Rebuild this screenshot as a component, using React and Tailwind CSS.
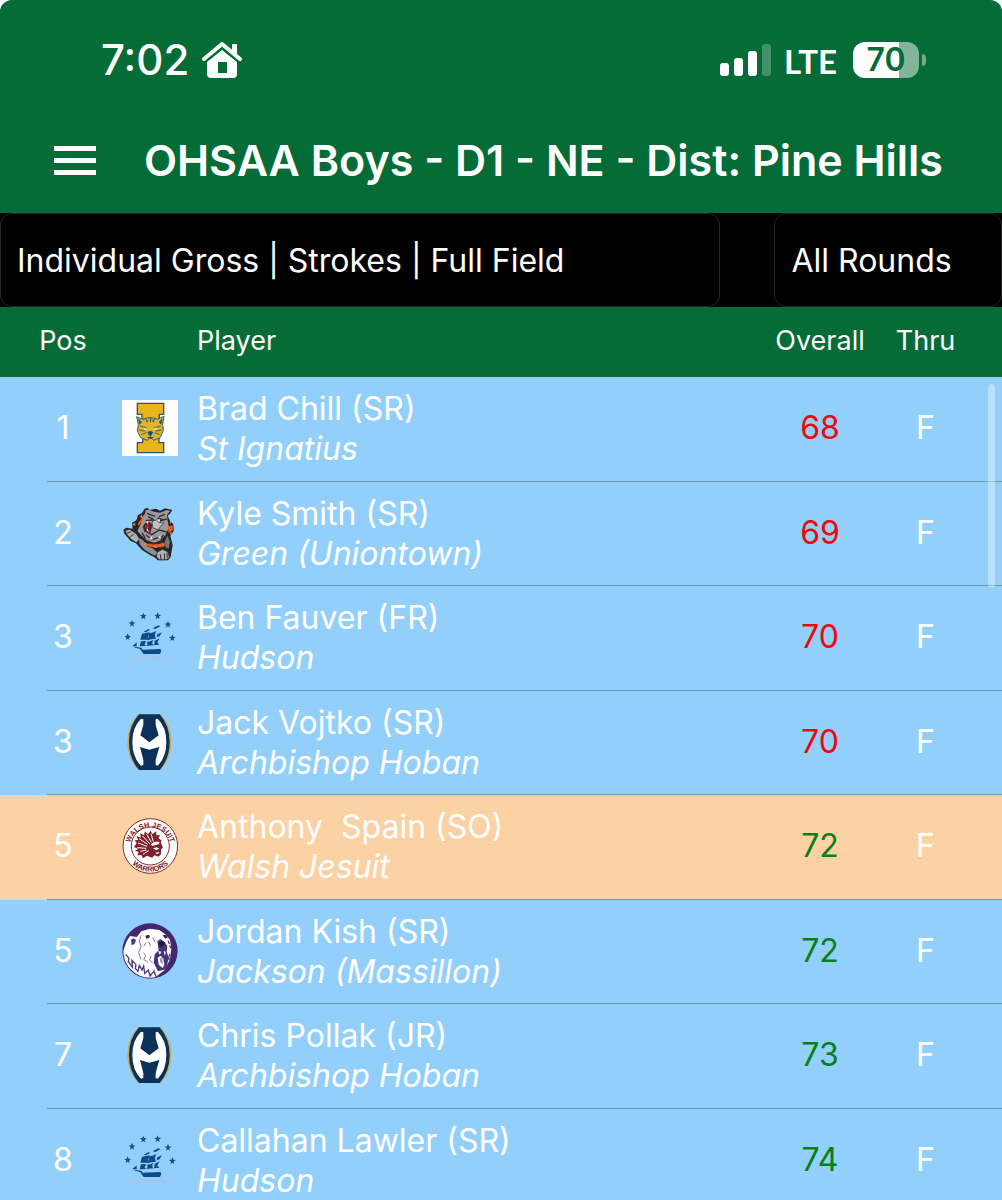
import React from "react";

function IgnatiusLogo() {
  return (
    <svg viewBox="36 30 168 168" className="block size-14" role="img" aria-label="St Ignatius logo">
      <rect x="36" y="30" width="168" height="168" fill="#fff" />
      <path d="M82 40H161V73H148V88H96V73H82Z" fill="#eab41c" stroke="#1d5a78" strokeWidth="4" />
      <path d="M98 144H147V158H161V188H82V158H98Z" fill="#eab41c" stroke="#1d5a78" strokeWidth="4" />
      <path d="M80 80L98 88Q120 78 143 88L162 79L158 103L160 122L150 143L131 151L122 142L112 151L92 143L82 123L85 104Z" fill="#e3b32c" stroke="#2c6472" strokeWidth="3" />
      <path d="M84 84L96 97L88 104ZM158 84L146 97L154 104ZM105 84L115 93L111 98ZM136 84L126 93L130 98ZM119 83H124L123 97H120Z" fill="#1d5a86" />
      <path d="M90 108L110 114M152 108L132 114M87 120L106 123M155 120L136 123M94 133L110 128M149 133L133 128" stroke="#6b7d49" strokeWidth="4" fill="none" />
      <path d="M100 112L113 119L103 119ZM142 112L129 119L139 119Z" fill="#fff3b0" />
      <path d="M113 126Q121 120 129 126L126 134L121 139L115 133Z" fill="#154f80" />
      <path d="M121 138V145M112 142Q121 146 130 142" stroke="#154f80" strokeWidth="3" fill="none" />
    </svg>
  );
}

function BulldogLogo() {
  return (
    <svg viewBox="36 30 168 168" className="block size-14" role="img" aria-label="Green bulldog logo">
      <path d="M103 42L112 38L119 45L138 41L150 47L165 40L187 45L180 56L173 62L180 78L190 88L191 108L181 123L188 150L182 186L174 196L144 196L133 187L120 180L96 165L78 145L62 138L43 116L40 104L49 98L68 101L66 83L79 76L84 60L96 54Z" fill="#252326" />
      <path d="M107 45L116 44L132 50L150 53L170 45L181 48L171 59L173 78L177 98L166 121L153 136L132 143L109 135L92 119L82 107L94 83L96 66L105 56Z" fill="#9b999b" />
      <path d="M84 84L103 60L99 76L85 93Z" fill="#f15a22" />
      <path d="M173 94L188 91V106L176 115Z" fill="#f15a22" />
      <path d="M98 139Q127 154 161 142L168 154Q133 165 105 151Z" fill="#f15a22" stroke="#252326" strokeWidth="2" />
      <path d="M45 107L58 103L79 116L89 132L79 143L65 134L51 119Z" fill="#b1afb0" stroke="#252326" strokeWidth="2" />
      <path d="M86 129L98 134L111 154L128 160L144 174L134 182L105 166L89 148Z" fill="#8f8d8f" />
      <path d="M142 171L158 163L174 171L178 188L168 194H148L139 185Z" fill="#b1afb0" stroke="#252326" strokeWidth="2" />
      <path d="M51 115L62 111M61 125L71 118M153 194L151 178M164 194L163 176M172 188L171 173" stroke="#302e31" strokeWidth="3" />
      <path d="M111 55L135 64M114 65L130 73M147 65L165 58M107 76L132 75M143 69L160 75M150 78L170 72M103 107L125 119L148 105L174 112M108 120L126 134L154 125M96 113L106 131M121 102L119 116M160 119L153 136" stroke="#302e31" strokeWidth="4" fill="none" />
      <path d="M105 84L119 81L127 90L121 113L103 109L98 96Z" fill="#342d30" />
      <path d="M106 90L116 87L120 97L111 102L105 98Z" fill="#b8242c" />
      <path d="M107 104L124 108L117 116Z" fill="#ce252f" />
      <path d="M126 80L139 75L147 83L162 84L151 94L146 104L129 99Z" fill="#c3c1c2" stroke="#343235" strokeWidth="2" />
      <path d="M109 81L117 79L112 88ZM141 76L151 72L148 81ZM118 132L125 123L128 134ZM144 128L151 120L153 130ZM109 105L113 100L116 110Z" fill="#ede9df" />
      <path d="M90 67L94 57L98 70ZM66 90L75 82L76 92ZM178 82L184 78L183 87ZM182 111L188 115L179 120ZM99 149L105 141L111 154ZM131 157L136 149L141 159ZM158 150L164 142L168 154Z" fill="#b39a61" />
      <path d="M173 119L181 141L177 162L166 158L163 139Z" fill="#77777a" stroke="#252326" strokeWidth="2" />
    </svg>
  );
}

const stars = [[53, 110], [66, 70], [100, 48], [143, 47], [174, 73], [187, 113]];

function HudsonLogo() {
  return (
    <svg viewBox="36 27 168 168" className="block size-14" role="img" aria-label="Hudson ship logo">
      {stars.map(([x, y]) => (
        <path key={x} transform={`translate(${x} ${y})`} d="M0-10L3-3L10-2L4 3L6 10L0 6L-6 10L-4 3L-10-2L-3-3Z" fill="#174f8e" />
      ))}
      <g fill="#104a89">
        <path d="M101 95L116 87L120 90L107 97Z" />
        <path d="M128 85L145 76L151 79L136 87Z" />
        <path d="M96 101L119 97L113 114L119 119L91 119Z" />
        <path d="M116 100Q130 99 139 93Q132 106 138 116L111 119Q119 110 116 100Z" />
        <path d="M142 103L155 97L149 109L140 111Z" />
        <path d="M93 124L108 123L104 135L110 138L89 139Z" />
        <path d="M111 125Q121 125 130 120Q124 130 130 136L108 138Q115 133 111 125Z" />
        <path d="M133 123L149 115L142 127L148 134L129 136Q136 131 133 123Z" />
        <path d="M67 139L80 127V139Z" />
        <path d="M74 140L94 143L98 149L151 147L154 152L150 162H101L90 147L72 142Z" />
      </g>
      <path d="M60 175H171" stroke="#b3bde8" strokeWidth="8" strokeDasharray="6 3 4 2 7 4" />
    </svg>
  );
}

function HobanLogo() {
  return (
    <svg viewBox="36 27 168 168" className="block size-14" role="img" aria-label="Archbishop Hoban logo">
      <path d="M84 28H152Q184 62 184 111Q184 160 152 195H84Q52 160 52 111Q52 62 84 28Z" fill="#c9a85b" />
      <path d="M87 28H149Q179 62 179 111Q179 160 149 195H87Q57 160 57 111Q57 62 87 28Z" fill="#0b315b" />
      <path d="M93 41L100 43V60L91 91L118 112L146 91L137 60V43L143 41Q169 66 169 111Q169 157 143 182L137 180V165L148 126L118 134L90 126L100 165V180L93 182Q67 157 67 111Q67 66 93 41Z" fill="#fff" />
    </svg>
  );
}

function WalshLogo() {
  return (
    <svg viewBox="36 32 168 168" className="block size-14" role="img" aria-label="Walsh Jesuit Warriors logo">
      <defs>
        <path id="walsh-top" d="M59 122A62 62 0 0 1 183 122" />
        <path id="walsh-bottom" d="M44 116A77 77 0 0 0 198 116" />
      </defs>
      <circle cx="121" cy="116" r="82" fill="#fff" stroke="#85272c" strokeWidth="3" />
      <circle cx="121" cy="116" r="57" fill="none" stroke="#85272c" strokeWidth="3" />
      <g fill="#7d1822" fontFamily="Liberation Sans, sans-serif" fontWeight="700">
        <text fontSize="22" textAnchor="middle"><textPath href="#walsh-top" startOffset="50%">WALSH JESUIT</textPath></text>
        <text fontSize="22" textAnchor="middle"><textPath href="#walsh-bottom" startOffset="50%">WARRIORS</textPath></text>
      </g>
      <path d="M80 107L74 99L84 98L80 86L92 91L91 78L102 84L105 72L114 81L122 70L127 80L139 72L139 84L151 84L145 92L154 99L153 107L159 121L153 126L153 140L146 148L134 144L126 151L111 145L99 153L94 143L82 144L86 134L75 130L85 125L72 119Z" fill="#82212a" />
      <path d="M84 107L111 117M82 121L108 123M87 94L113 111M98 86L119 109M110 81L124 105M123 79L130 103M91 132L110 128M99 141L116 130" stroke="#fff" strokeWidth="3" />
      <path d="M122 111Q137 98 149 105L146 111L127 116Z" fill="#fff" />
      <path d="M129 123L140 120L148 124L139 129ZM135 136L149 134L143 141Z" fill="#fff" />
    </svg>
  );
}

function JacksonLogo() {
  return (
    <svg viewBox="36 33 168 168" className="block size-14" role="img" aria-label="Jackson polar bear logo">
      <defs><clipPath id="bear-clip"><circle cx="120" cy="117" r="80" /></clipPath></defs>
      <circle cx="120" cy="117" r="83" fill="#42276f" />
      <g clipPath="url(#bear-clip)">
        <path d="M34 132L50 88L60 72L80 75L94 58L120 50L148 54L168 68L180 84L184 110L180 142L164 174L125 204H73Z" fill="#fff" />
        <path d="M64 81Q75 76 78 86L73 97L64 99Z" fill="#503785" />
        <path d="M142 88L151 81L164 90L172 102L170 116L176 140L168 172L144 178L131 152L134 127L146 115Z" fill="#4a317b" />
        <path d="M143 137L152 131L160 140L163 158L158 168L146 158Z" fill="#fff" />
        <path d="M149 140L156 137L159 156L152 153Z" fill="#9d8bb8" />
        <path d="M106 71L117 68L120 76L109 81ZM158 70L168 68L174 76L166 80Z" fill="#35254f" />
        <path d="M145 93L157 86L166 93L160 102L150 105Z" fill="#201c35" />
        <path d="M145 117L149 129L154 119ZM161 117L164 131L168 120Z" fill="#fff" />
        <path d="M93 71L88 87L93 104L86 121L93 143M108 92L101 103M128 76L135 91M116 89L122 102M101 122L107 131L101 142L114 151M123 132L119 145L128 153" stroke="#8874a9" strokeWidth="3" fill="none" />
        <path d="M47 127L57 139L55 149L67 165L66 145L78 158L76 169L84 178L88 160L96 174L101 162L104 184L115 174L120 192L132 177L138 194M180 126L175 139L183 145M178 101L185 110M174 86L178 96" stroke="#51377f" strokeWidth="4" fill="none" />
      </g>
    </svg>
  );
}

const players = [
  { pos: 1, name: "Brad Chill (SR)", school: "St Ignatius", Logo: IgnatiusLogo, score: 68 },
  { pos: 2, name: "Kyle Smith (SR)", school: "Green (Uniontown)", Logo: BulldogLogo, score: 69 },
  { pos: 3, name: "Ben Fauver (FR)", school: "Hudson", Logo: HudsonLogo, score: 70 },
  { pos: 3, name: "Jack Vojtko (SR)", school: "Archbishop Hoban", Logo: HobanLogo, score: 70 },
  { pos: 5, name: "Anthony  Spain (SO)", school: "Walsh Jesuit", Logo: WalshLogo, score: 72, highlight: true },
  { pos: 5, name: "Jordan Kish (SR)", school: "Jackson (Massillon)", Logo: JacksonLogo, score: 72 },
  { pos: 7, name: "Chris Pollak (JR)", school: "Archbishop Hoban", Logo: HobanLogo, score: 73 },
  { pos: 8, name: "Callahan Lawler (SR)", school: "Hudson", Logo: HudsonLogo, score: 74 },
];

function StatusBar() {
  return (
    <div className="flex h-[108px] items-center justify-between pt-3 pr-[76px] pl-[101px]">
      <div className="flex items-center gap-3">
        <span className="text-[42px] leading-none font-medium">7:02</span>
        <svg viewBox="0 0 42 38" className="h-[38px] w-[42px]" fill="none" aria-label="Home">
          <path d="M31 4Q31 3 32 3H35Q36 3 36 4V15L31 11Z" fill="#fff" />
          <path d="M3 18L21 3L39 18" stroke="#fff" strokeWidth="4" strokeLinecap="round" strokeLinejoin="round" />
          <path fillRule="evenodd" d="M6 21L21 9L36 21V33Q36 37 32 37H10Q6 37 6 33ZM17 21V32H26V21Z" fill="#fff" />
        </svg>
      </div>
      <div className="flex items-center">
        <svg viewBox="0 0 52 32" className="mr-3 h-8 w-[52px]" fill="#fff" aria-label="Signal strength">
          <rect x="0" y="19" width="9" height="13" rx="3" />
          <rect x="14" y="14" width="9" height="18" rx="3" />
          <rect x="28" y="7" width="9" height="25" rx="3" />
          <rect x="42" y="0" width="9" height="32" rx="3" opacity=".25" />
        </svg>
        <span className="mr-4 pt-0.5 font-[Lato,sans-serif] text-[33px] leading-none font-bold">LTE</span>
        <div className="flex h-9 w-[66px] items-center justify-center rounded-xl bg-linear-to-r from-white from-70% to-[#83b598] to-70% text-[32px] leading-none font-semibold text-[#056c38]">70</div>
        <span className="ml-[3px] h-3 w-1 rounded-r-full bg-[#70aa88]" />
      </div>
    </div>
  );
}

export default function App() {
  return (
    <div className="w-full overflow-hidden rounded-t-xl bg-[#93cffb] font-[Inter,sans-serif] text-white">
      <header className="bg-[#056c38]">
        <StatusBar />
        <div className="flex h-[105px] items-center gap-12 pl-[54px]">
          <button type="button" aria-label="Menu" className="flex w-[42px] flex-col gap-[7px]">
            <span className="h-[5px] bg-white" />
            <span className="h-[5px] bg-white" />
            <span className="h-[5px] bg-white" />
          </button>
          <h1 className="text-[43px] leading-none font-semibold whitespace-nowrap">OHSAA Boys - D1 - NE - Dist: Pine Hills</h1>
        </div>
      </header>

      <div className="grid h-[94px] grid-cols-[19fr_6fr] gap-[54px] bg-black">
        <select aria-label="Leaderboard" className="min-w-0 appearance-none rounded-xl border border-[#262626] bg-black px-4 pt-0.5 text-[32px]">
          <option>Individual Gross | Strokes | Full Field</option>
        </select>
        <select aria-label="Round" className="min-w-0 appearance-none rounded-xl border border-[#262626] bg-black px-4 pt-0.5 text-[32px]">
          <option>All Rounds</option>
        </select>
      </div>

      <div className="relative">
        <table className="w-full table-fixed border-separate border-spacing-0">
          <colgroup>
            <col className="w-[122px]" />
            <col className="w-[75px]" />
            <col />
            <col className="w-[106px]" />
            <col className="w-[129px]" />
          </colgroup>
          <thead>
            <tr className="h-[70px] bg-[#056c38] text-[27px]">
              <th scope="col" className="pb-0.5 pl-1 font-normal">Pos</th>
              <td />
              <th scope="col" className="pb-0.5 text-left font-normal">Player</th>
              <th scope="col" className="pb-0.5 font-normal">Overall</th>
              <th scope="col" className="pr-6 pb-0.5 font-normal">Thru</th>
            </tr>
          </thead>
          <tbody className="text-[32px] leading-10">
            {players.map(({ pos, name, school, Logo, score, highlight }) => (
              <tr key={name} className={`h-[105px] even:h-[104px] ${highlight ? "bg-[#fcd1a4]" : ""}`}>
                <td className="relative pb-[3px] pl-1 text-center after:absolute after:right-0 after:bottom-0 after:left-[47px] after:h-px after:bg-[#6c9abb]">{pos}</td>
                <td className="border-b border-[#6c9abb] pb-0.5"><Logo /></td>
                <td className="border-b border-[#6c9abb] whitespace-pre">
                  <div>{name}</div>
                  <div className="italic">{school}</div>
                </td>
                <td className={`border-b border-[#6c9abb] pb-0.5 text-center ${score < 72 ? "text-[#f0060c]" : "text-[#078018]"}`}>{score}</td>
                <td className="border-b border-[#6c9abb] pr-6 pb-0.5 text-center">F</td>
              </tr>
            ))}
          </tbody>
        </table>
        <div className="absolute top-[77px] right-[7px] h-[204px] w-[7px] rounded-full bg-white/35" />
      </div>
    </div>
  );
}
